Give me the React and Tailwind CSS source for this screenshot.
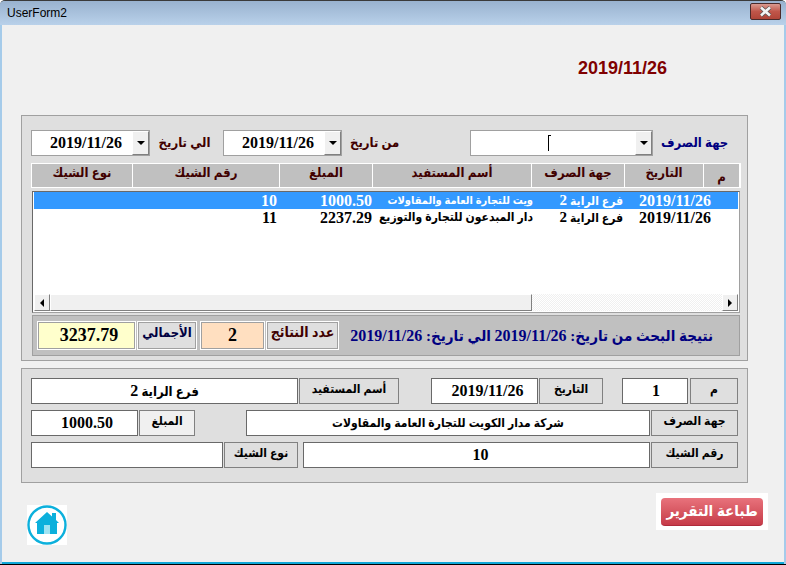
import React from 'react';

const serif = "font-['Liberation_Serif','DejaVu_Sans_Condensed','DejaVu_Sans',serif]";

function DownButton() {
    return (
        <div className="w-[17px] h-[24px] bg-[#f0f0f0] border border-t-white border-l-white border-r-[#808080] border-b-[#808080] flex items-center justify-center">
            <div className="w-0 h-0 border-x-[4px] border-x-transparent border-t-[4px] border-t-black"></div>
        </div>
    );
}

function Combo({ width, children }) {
    return (
        <div className={`${width} h-[26px] bg-white border border-[#a0a0a0] flex items-center`}>
            <div className="flex-1 pl-[8px] flex items-center justify-center font-bold text-[16px] text-black">{children}</div>
            <DownButton />
        </div>
    );
}

function ColHead({ width, children }) {
    return (
        <div dir="rtl" className={`${width} h-[23px] bg-[#c0c0c0] flex items-start justify-center font-bold text-[13px] leading-[18px] text-[#400000]`}>{children}</div>
    );
}

function Row({ selected, date, branch, name, nameSize, amount, cheque }) {
    return (
        <div className={`flex h-[17px] font-bold text-[16px] leading-[17px] ${selected ? 'bg-[#3399ff] text-white' : 'bg-white text-black'}`}>
            <div className="w-[222px]"></div>
            <div className="w-[21px] text-right">{cheque}</div>
            <div className="w-[95px] text-right">{amount}</div>
            <div dir="rtl" className={`w-[161px] overflow-hidden whitespace-nowrap ${nameSize}`}>{name}</div>
            <div dir="rtl" className="w-[90px] pr-[-8px] whitespace-nowrap text-[12px]">{branch}</div>
            <div className="w-[88px] text-right">{date}</div>
        </div>
    );
}

function Field({ width, children }) {
    return (
        <div dir="rtl" className={`${width} h-[26px] bg-white border border-[#696969] flex items-center justify-center font-bold text-[16px] text-black whitespace-nowrap`}>{children}</div>
    );
}

function FieldLabel({ width, light, children }) {
    return (
        <div dir="rtl" className={`${width} h-[26px] ${light ? 'bg-[#f0f0f0]' : 'bg-[#dfdfdf]'} border border-[#808080] flex items-start justify-center font-bold text-[12px] leading-[20px] text-black whitespace-nowrap`}>{children}</div>
    );
}

function ResultLabel({ width, children }) {
    return (
        <div dir="rtl" className={`${width} h-[29px] bg-[#dfdfdf] border border-white outline outline-[#a0a0a0] -outline-offset-2 flex items-start justify-center pt-[2px] font-bold leading-[18px] whitespace-nowrap`}>{children}</div>
    );
}

function App() {
    const branch = <>فرع الراية <span className="text-[15px]">2</span></>;

    return (
        <div className={`w-[786px] h-[565px] overflow-hidden flex flex-col ${serif} bg-[#a5cbea] border-t border-t-[#3a3a3a] border-b border-b-black rounded-t-[5px]`}>
            <div className="h-[24px] shrink-0 flex items-center justify-between pl-[7px] pr-[5px] bg-gradient-to-b from-[#99b2cf] to-[#b9d1ea]">
                <span className="font-['Liberation_Sans',sans-serif] text-[12px] text-black">UserForm2</span>
                <div className="w-[31px] h-[17px] mt-[-3px] rounded-[2px] border border-[#4a2a2a] bg-gradient-to-b from-[#d99a90] via-[#c0564a] to-[#b04538] flex items-center justify-center">
                    <svg width="15" height="11" viewBox="0 0 15 11">
                        <path d="M3 1.5 L12 9.5 M12 1.5 L3 9.5" stroke="#555" strokeWidth="4" />
                        <path d="M3 1.5 L12 9.5 M12 1.5 L3 9.5" stroke="#f4f4f4" strokeWidth="2.6" />
                    </svg>
                </div>
            </div>

            <div className="flex-1 mx-[2px] bg-[#f0f0f0] flex flex-col pl-[19px] pr-[36px] border-b-2 border-b-[#10a8d8]">
                <div className="h-[90px] shrink-0 flex justify-end pr-[81px] pt-[33px]">
                    <span className="font-['Liberation_Sans',sans-serif] font-bold text-[18px] leading-[20px] text-[#800000]">2019/11/26</span>
                </div>

                <div className="h-[246px] shrink-0 bg-[#dfdfdf] border border-[#a0a0a0] pl-[9px] pt-[14px]">
                    <div className="flex items-center h-[26px]">
                        <Combo width="w-[119px]">2019/11/26</Combo>
                        <div dir="rtl" className="w-[73px] pr-[4px] text-center font-bold text-[13px] text-[#400000]">الي تاريخ</div>
                        <Combo width="w-[119px]">2019/11/26</Combo>
                        <div dir="rtl" className="w-[128px] font-bold text-[13px] text-[#400000] whitespace-nowrap">
                            <span className="block text-left pl-[8px]">من تاريخ</span>
                        </div>
                        <div className="w-[183px] h-[26px] bg-white border border-[#a0a0a0] flex items-center">
                            <div className="flex-1 flex justify-center">
                                <div className="w-[3px] h-[16px] border-l border-t border-black ml-[-7px]"></div>
                            </div>
                            <DownButton />
                        </div>
                        <div dir="rtl" className="w-[76px] text-left pl-[8px] font-bold text-[13px] text-[#000080] whitespace-nowrap">جهة الصرف</div>
                    </div>

                    <div className="flex gap-px mt-[7px] w-[710px] bg-white p-px">
                        <ColHead width="w-[100px]">نوع الشيك</ColHead>
                        <ColHead width="w-[146px]">رقم الشيك</ColHead>
                        <ColHead width="w-[92px]">المبلغ</ColHead>
                        <ColHead width="w-[158px]">أسم المستفيد</ColHead>
                        <ColHead width="w-[92px]">جهة الصرف</ColHead>
                        <ColHead width="w-[78px]">التاريخ</ColHead>
                        <ColHead width="w-[35px] pt-[4px]">م</ColHead>
                    </div>

                    <div className="w-[708px] h-[122px] mt-[3px] ml-px bg-white border border-[#696969] border-r-[#a0a0a0] border-b-[#a0a0a0] px-px flex flex-col">
                        <div className="flex-1">
                            <Row selected date="2019/11/26" branch={branch} name="ويت للتجارة العامة والمقاولات" nameSize="text-[11px]" amount="1000.50" cheque="10" />
                            <Row date="2019/11/26" branch={branch} name="دار المبدعون للتجارة والتوزيع" nameSize="text-[12px]" amount="2237.29" cheque="11" />
                        </div>
                        <div className="h-[17px] mb-px flex">
                            <div className="w-[16px] bg-[#f0f0f0] border border-t-white border-l-white border-r-[#808080] border-b-[#808080] flex items-center justify-center">
                                <div className="w-0 h-0 border-y-[4px] border-y-transparent border-r-[4px] border-r-black"></div>
                            </div>
                            <div className="w-[482px] bg-[#f0f0f0] border border-t-white border-l-white border-r-[#808080] border-b-[#808080]"></div>
                            <div className="flex-1 bg-[repeating-conic-gradient(#f0f0f0_0_25%,#fff_0_50%)] bg-[length:2px_2px]"></div>
                            <div className="w-[16px] bg-[#f0f0f0] border border-t-white border-l-white border-r-[#808080] border-b-[#808080] flex items-center justify-center">
                                <div className="w-0 h-0 border-y-[4px] border-y-transparent border-l-[4px] border-l-black"></div>
                            </div>
                        </div>
                    </div>

                    <div className="w-[708px] h-[41px] mt-[2px] ml-px bg-[#c0c0c0] border border-[#a0a0a0] flex items-center pl-[4px]">
                        <div className="w-[99px] h-[29px] pl-[5px] bg-[#ffffcc] border border-white outline outline-[#a0a0a0] -outline-offset-2 flex items-center justify-center font-bold text-[18px] text-black">3237.79</div>
                        <ResultLabel width="w-[60px] ml-px text-[13px] text-[#000040]">الأجمالي</ResultLabel>
                        <div className="w-[65px] h-[29px] ml-[3px] bg-[#ffdfc0] border border-white outline outline-[#a0a0a0] -outline-offset-2 flex items-center justify-center font-bold text-[18px] text-black">2</div>
                        <ResultLabel width="w-[73px] ml-px text-[14px] text-[#400000]">عدد النتائج</ResultLabel>
                        <div dir="rtl" className="flex-1 pr-[26px] font-bold text-[15px] text-[#000080] whitespace-nowrap">نتيجة البحث من تاريخ: <span className="text-[16px]">2019/11/26</span> الي تاريخ: <span className="text-[16px]">2019/11/26</span></div>
                    </div>
                </div>

                <div className="h-[115px] shrink-0 mt-[7px] bg-[#dfdfdf] border border-[#a0a0a0] pl-[9px] pt-[9px] flex flex-col gap-[6px]">
                    <div className="flex">
                        <Field width="w-[267px]"><span className="text-[13px]">فرع الراية <span className="text-[16px]">2</span></span></Field>
                        <FieldLabel width="w-[100px] ml-px">أسم المستفيد</FieldLabel>
                        <Field width="w-[107px] ml-[32px] pl-[6px]">2019/11/26</Field>
                        <FieldLabel width="w-[64px] ml-px">التاريخ</FieldLabel>
                        <Field width="w-[66px] ml-[19px] pl-[2px]">1</Field>
                        <FieldLabel width="w-[48px] ml-[2px]">م</FieldLabel>
                    </div>
                    <div className="flex">
                        <Field width="w-[107px] pl-[5px]">1000.50</Field>
                        <FieldLabel light width="w-[56px] ml-px">المبلغ</FieldLabel>
                        <Field width="w-[404px] ml-[51px]"><span className="text-[12px]">شركة مدار الكويت للتجارة العامة والمقاولات</span></Field>
                        <FieldLabel width="w-[87px] ml-px">جهة الصرف</FieldLabel>
                    </div>
                    <div className="flex">
                        <Field width="w-[192px]"></Field>
                        <FieldLabel width="w-[74px] ml-px">نوع الشيك</FieldLabel>
                        <Field width="w-[347px] ml-[5px] pl-[8px]">10</Field>
                        <FieldLabel width="w-[87px] ml-px">رقم الشيك</FieldLabel>
                    </div>
                </div>

                <div className="flex-1 flex justify-between items-start">
                    <div className="w-[40px] h-[40px] mt-[22px] ml-[6px] bg-white flex items-center justify-center">
                        <svg width="40" height="40" viewBox="0 0 40 40">
                            <circle cx="20" cy="20" r="18.5" fill="#fff" stroke="#0cb0dc" strokeWidth="2.4" />
                            <path d="M8 18 L20 7 L25 11.5 L25 8 L29 8 L29 15 L32 18 L30 18 L30 29 L10 29 L10 18 Z" fill="#0cb0dc" />
                            <rect x="17" y="20" width="6" height="9" fill="#9fe3f2" />
                        </svg>
                    </div>
                    <div className="w-[112px] h-[37px] mt-[10px] mr-[-20px] bg-white flex items-center justify-center">
                        <div dir="rtl" className="w-[102px] h-[28px] rounded-[4px] border-b border-b-[#b02a3a] bg-gradient-to-b from-[#e8727c] to-[#c63a48] flex items-center justify-center font-bold text-[15px] text-white whitespace-nowrap">طباعة التقرير</div>
                    </div>
                </div>
            </div>
        </div>
    );
}

export default App;
